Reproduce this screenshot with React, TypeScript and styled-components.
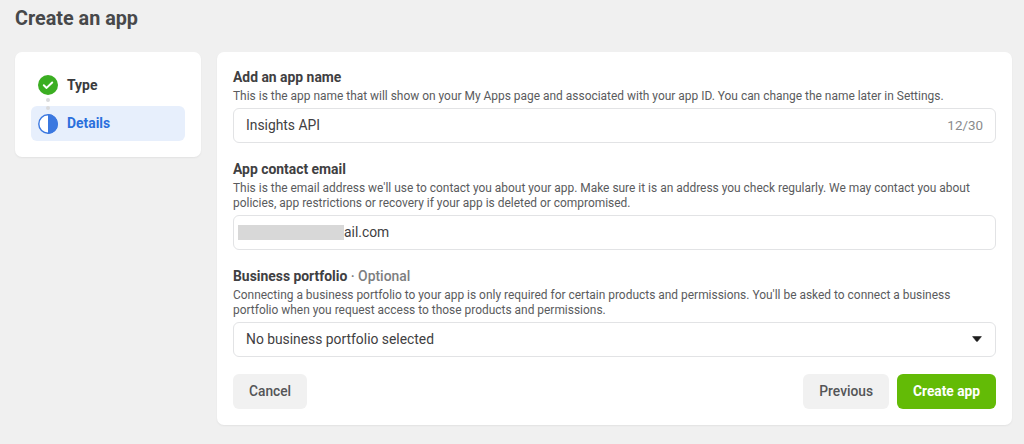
import React from "react";
import styled, { createGlobalStyle } from "styled-components";

const Global = createGlobalStyle`
  html, body { margin: 0; padding: 0; background: #f0f0f0; }
  body { font-family: Roboto, "Liberation Sans", sans-serif; color: #3a3b3d; }
  #root { width: 1024px; height: 444px; overflow: hidden; }
`;

const Page = styled.div`
  width: 1024px;
  height: 444px;
  padding: 9px 12px 0 15px;
  box-sizing: border-box;
  background: #f0f0f0;
`;

const Title = styled.h1`
  margin: 0 0 23px;
  height: 20px;
  font-size: 19.8px;
  line-height: 20px;
  font-weight: 700;
  color: #47484a;
`;

const Columns = styled.div`
  display: flex;
  align-items: flex-start;
  gap: 16px;
`;

const Card = styled.div`
  background: #fff;
  border-radius: 7px;
  box-shadow: 0 1px 2px rgba(0, 0, 0, 0.06);
  box-sizing: border-box;
`;

const SideCard = styled(Card)`
  width: 186px;
  height: 105px;
  padding: 15px 16px 0;
  flex: none;
`;

const Step = styled.div<{ $active?: boolean }>`
  position: relative;
  display: flex;
  align-items: center;
  gap: 9px;
  height: 35px;
  padding-left: 7px;
  border-radius: 6px;
  font-size: 13.9px;
  font-weight: 700;
  background: ${(p) => (p.$active ? "#e7effc" : "transparent")};
  color: ${(p) => (p.$active ? "#2b6fdc" : "#3a3b3d")};
`;

const Dot = styled.span`
  position: absolute;
  left: 15px;
  top: 0;
  width: 4px;
  height: 4px;
  border-radius: 50%;
  background: #d9dadc;
  box-shadow: 0 -8px 0 #d9dadc;
`;

const TypeStep = styled(Step)`
  height: 36px;
  margin-bottom: 3px;
`;

const StepText = styled.span`
  margin-bottom: 1px;
`;

const MainCard = styled(Card)`
  width: 795px;
  height: 373px;
  padding: 17px 16px 0;
  flex: none;
`;

const Field = styled.div`
  margin-bottom: 18px;
`;

const Label = styled.div`
  font-size: 13.9px;
  line-height: 16px;
  font-weight: 700;
  color: #3f4042;
`;

const Optional = styled.span`
  color: #7d7e80;
  font-weight: 500;
`;

const Help = styled.div`
  font-size: 11.95px;
  line-height: 15px;
  color: #5a5b5d;
  margin: 4px 0 4px;
  width: 745px;
`;

const Box = styled.div`
  display: flex;
  align-items: center;
  justify-content: space-between;
  height: 35px;
  box-sizing: border-box;
  padding: 0 12px 1px;
  border: 1px solid #e2e3e5;
  border-radius: 6px;
  font-size: 13.85px;
  color: #3f4042;
`;

const Counter = styled.span`
  font-size: 13.4px;
  color: #8a8b8d;
`;

const EmailValue = styled.span`
  display: flex;
  align-items: center;
  margin-left: -8px;
`;

const Redacted = styled.span`
  display: block;
  width: 106px;
  height: 15px;
  background: #d8d8d8;
`;

const CaretBox = styled.span`
  display: flex;
  margin-right: 1px;
`;

const Actions = styled.div`
  display: flex;
  justify-content: space-between;
  margin-top: -1px;
`;

const Group = styled.div`
  display: flex;
  gap: 8px;
`;

const Button = styled.button<{ $primary?: boolean }>`
  height: 35px;
  padding: 0 16px 2px;
  border: none;
  border-radius: 6px;
  font-family: inherit;
  font-size: 13.75px;
  font-weight: ${(p) => (p.$primary ? 700 : 500)};
  background: ${(p) => (p.$primary ? "#63bb06" : "#f1f1f1")};
  color: ${(p) => (p.$primary ? "#fff" : "#545557")};
`;

const Check = () => (
  <svg width="20" height="20" viewBox="0 0 20 20">
    <circle cx="10" cy="10" r="10" fill="#3bae22" />
    <path d="M5.8 10.3l2.8 2.6 5.6-5.4" fill="none" stroke="#fff" strokeWidth="2" strokeLinecap="round" strokeLinejoin="round" />
  </svg>
);

const Half = () => (
  <svg width="20" height="20" viewBox="0 0 20 20">
    <circle cx="10" cy="10" r="9.2" fill="#fff" stroke="#3b78e0" strokeWidth="1.4" />
    <path d="M10 0a10 10 0 0 1 0 20z" fill="#3b78e0" />
  </svg>
);

const Caret = () => (
  <svg width="10" height="6" viewBox="0 0 10 6">
    <path d="M.6.6h8.8L5.6 5.2a.8.8 0 0 1-1.2 0z" fill="#1c1c1c" stroke="#1c1c1c" strokeWidth="0.6" strokeLinejoin="round" />
  </svg>
);

export default function App() {
  return (
    <Page>
      <Global />
      <Title>Create an app</Title>
      <Columns>
        <SideCard>
          <TypeStep>
            <Check />
            <StepText>Type</StepText>
          </TypeStep>
          <Step $active>
            <Dot />
            <Half />
            <StepText>Details</StepText>
          </Step>
        </SideCard>
        <MainCard>
          <Field>
            <Label>Add an app name</Label>
            <Help>This is the app name that will show on your My Apps page and associated with your app ID. You can change the name later in Settings.</Help>
            <Box>
              Insights API
              <Counter>12/30</Counter>
            </Box>
          </Field>
          <Field>
            <Label>App contact email</Label>
            <Help>This is the email address we'll use to contact you about your app. Make sure it is an address you check regularly. We may contact you about policies, app restrictions or recovery if your app is deleted or compromised.</Help>
            <Box>
              <EmailValue>
                <Redacted />
                ail.com
              </EmailValue>
            </Box>
          </Field>
          <Field>
            <Label>
              Business portfolio <Optional>· Optional</Optional>
            </Label>
            <Help>Connecting a business portfolio to your app is only required for certain products and permissions. You'll be asked to connect a business portfolio when you request access to those products and permissions.</Help>
            <Box>
              No business portfolio selected
              <CaretBox>
                <Caret />
              </CaretBox>
            </Box>
          </Field>
          <Actions>
            <Button>Cancel</Button>
            <Group>
              <Button>Previous</Button>
              <Button $primary>Create app</Button>
            </Group>
          </Actions>
        </MainCard>
      </Columns>
    </Page>
  );
}
